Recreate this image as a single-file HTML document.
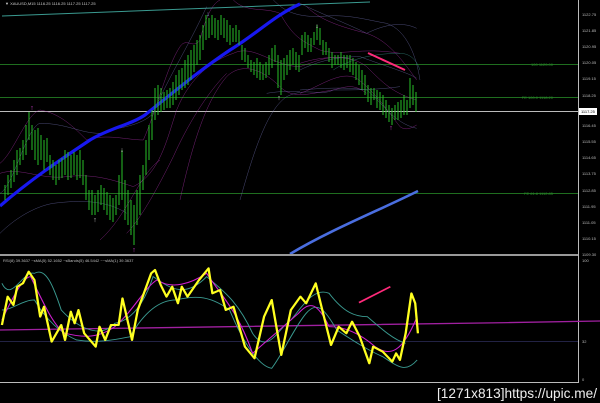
<!DOCTYPE html>
<html><head><meta charset="utf-8"><style>
html,body{margin:0;padding:0;background:#000;width:600px;height:403px;overflow:hidden}
svg{display:block}
text{font-family:"Liberation Sans",sans-serif}
</style></head><body>
<svg width="600" height="403" viewBox="0 0 600 403" xmlns="http://www.w3.org/2000/svg">
<rect width="600" height="403" fill="#000"/>
<line x1="0" y1="64.5" x2="578" y2="64.5" stroke="#1f6e1f" stroke-width="1"/>
<line x1="0" y1="97.5" x2="578" y2="97.5" stroke="#1f6e1f" stroke-width="1"/>
<line x1="0" y1="193.5" x2="578" y2="193.5" stroke="#1f6e1f" stroke-width="1"/>
<line x1="0" y1="111.5" x2="578" y2="111.5" stroke="#bbb" stroke-width="1"/>
<text x="553" y="66" font-size="4" fill="#2a8a2a" text-anchor="end">100 1120.00</text>
<text x="553" y="99" font-size="4" fill="#2a8a2a" text-anchor="end">FE 100.0 1118.20</text>
<text x="553" y="195" font-size="4" fill="#2a8a2a" text-anchor="end">FE 61.8 1112.85</text>
<line x1="2" y1="16" x2="370" y2="2" stroke="#3a9a90" stroke-width="1"/>
<g fill="none" stroke-width="1" transform="scale(0.3333)">
<path d="M0,490 C40,460 80,340 120,330 C180,340 220,380 260,420 C320,400 380,420 430,420 C470,330 500,200 540,140 C560,110 580,150 600,120 C620,40 640,10 660,0" stroke="#b030b0"/>
<path d="M0,580 C40,560 80,380 120,370 C200,370 240,400 300,400 C360,380 420,380 460,340 C500,240 560,150 620,20" stroke="#7070b0"/>
<path d="M0,520 C60,500 120,540 200,530 C280,520 340,540 400,560 C480,520 500,420 530,330 C570,230 640,180 700,160 C760,130 820,200 900,200 C960,180 1000,160 1060,180" stroke="#b030b0"/>
<path d="M540,600 C580,420 620,300 680,230 C720,190 780,200 840,260 C880,300 930,280 1000,270 C1040,260 1060,250 1100,280" stroke="#b030b0"/>
<path d="M720,600 C760,460 800,330 860,290 C920,260 960,290 1000,270 C1060,270 1130,270 1200,260" stroke="#7070b0"/>
<path d="M700,0 C740,40 790,20 840,40 C880,110 900,120 960,150 C1020,170 1080,140 1200,160" stroke="#b030b0"/>
<path d="M820,0 C850,30 880,50 960,50 C1040,40 1100,60 1160,70 C1220,90 1250,170 1260,240" stroke="#7070b0"/>
<path d="M1000,210 C1060,170 1140,160 1200,160 C1230,160 1250,180 1260,210" stroke="#3a9a90"/>
<path d="M300,720 C380,650 420,520 480,480" stroke="#b030b0"/>
<path d="M0,700 C40,660 100,620 160,610 C240,600 320,600 380,640" stroke="#7070b0"/>
<path d="M380,700 C420,660 470,570 520,470 C560,380 620,280 680,220" stroke="#b030b0"/>
</g>
<g fill="none" stroke-width="1" transform="translate(300,0) scale(0.3333)">
<path d="M0,210 C60,180 120,170 180,170 C260,200 330,220 350,235" stroke="#7070b0"/>
<path d="M0,190 C60,170 150,160 200,200 C250,250 280,280 350,300" stroke="#b030b0"/>
<path d="M20,20 C60,60 120,80 200,100 C260,120 300,170 350,240" stroke="#b030b0"/>
<path d="M0,10 C60,40 140,70 200,100 C240,80 300,60 350,85" stroke="#7070b0"/>
<path d="M0,280 C60,260 120,210 170,235 C230,280 260,330 300,380 C320,395 340,380 350,375" stroke="#b030b0"/>
<path d="M0,270 C60,265 140,260 200,270 C240,300 280,370 350,385" stroke="#7070b0"/>
<path d="M-100,280 C-40,270 0,275 0,275" stroke="#7070b0"/>
</g>
<path d="M0,206 C30,180 60,160 90,140 C110,128 130,125 145,115 C170,95 200,70 230,50 C255,35 275,15 300,4" fill="none" stroke="#1818f0" stroke-width="3.2"/>
<path d="M290,254 C330,230 380,210 418,191" fill="none" stroke="#4a6ee0" stroke-width="2.6"/>
<g stroke="#28c028" stroke-width="1">
<line x1="5" y1="185" x2="5" y2="200"/><line x1="8" y1="175" x2="8" y2="195"/><line x1="11" y1="170" x2="11" y2="188"/><line x1="14" y1="160" x2="14" y2="182"/><line x1="17" y1="150" x2="17" y2="175"/><line x1="20" y1="148" x2="20" y2="165"/><line x1="23" y1="140" x2="23" y2="160"/><line x1="26" y1="125" x2="26" y2="155"/><line x1="29" y1="112" x2="29" y2="140"/><line x1="32" y1="125" x2="32" y2="150"/><line x1="35" y1="130" x2="35" y2="160"/><line x1="38" y1="128" x2="38" y2="165"/><line x1="41" y1="135" x2="41" y2="160"/><line x1="44" y1="140" x2="44" y2="170"/><line x1="47" y1="138" x2="47" y2="162"/><line x1="50" y1="155" x2="50" y2="175"/><line x1="53" y1="160" x2="53" y2="180"/><line x1="56" y1="165" x2="56" y2="185"/><line x1="59" y1="160" x2="59" y2="180"/><line x1="62" y1="158" x2="62" y2="178"/><line x1="65" y1="150" x2="65" y2="175"/><line x1="68" y1="152" x2="68" y2="180"/><line x1="71" y1="155" x2="71" y2="178"/><line x1="74" y1="152" x2="74" y2="175"/><line x1="77" y1="155" x2="77" y2="180"/><line x1="80" y1="150" x2="80" y2="178"/><line x1="83" y1="160" x2="83" y2="185"/><line x1="86" y1="175" x2="86" y2="200"/><line x1="89" y1="190" x2="89" y2="210"/><line x1="92" y1="190" x2="92" y2="215"/><line x1="95" y1="195" x2="95" y2="215"/><line x1="98" y1="190" x2="98" y2="212"/><line x1="101" y1="185" x2="101" y2="205"/><line x1="104" y1="188" x2="104" y2="210"/><line x1="107" y1="192" x2="107" y2="215"/><line x1="110" y1="195" x2="110" y2="220"/><line x1="113" y1="198" x2="113" y2="222"/><line x1="116" y1="195" x2="116" y2="215"/><line x1="119" y1="175" x2="119" y2="205"/><line x1="122" y1="150" x2="122" y2="200"/><line x1="125" y1="180" x2="125" y2="220"/><line x1="128" y1="190" x2="128" y2="225"/><line x1="131" y1="200" x2="131" y2="235"/><line x1="134" y1="205" x2="134" y2="245"/><line x1="137" y1="190" x2="137" y2="225"/><line x1="140" y1="175" x2="140" y2="215"/><line x1="143" y1="165" x2="143" y2="190"/><line x1="146" y1="140" x2="146" y2="175"/><line x1="149" y1="125" x2="149" y2="160"/><line x1="152" y1="110" x2="152" y2="140"/><line x1="155" y1="88" x2="155" y2="120"/><line x1="158" y1="85" x2="158" y2="115"/><line x1="161" y1="88" x2="161" y2="112"/><line x1="164" y1="92" x2="164" y2="110"/><line x1="167" y1="90" x2="167" y2="108"/><line x1="170" y1="88" x2="170" y2="108"/><line x1="173" y1="82" x2="173" y2="105"/><line x1="176" y1="75" x2="176" y2="100"/><line x1="179" y1="70" x2="179" y2="95"/><line x1="182" y1="68" x2="182" y2="90"/><line x1="185" y1="60" x2="185" y2="88"/><line x1="188" y1="55" x2="188" y2="85"/><line x1="191" y1="50" x2="191" y2="80"/><line x1="194" y1="45" x2="194" y2="72"/><line x1="197" y1="40" x2="197" y2="65"/><line x1="200" y1="35" x2="200" y2="60"/><line x1="203" y1="25" x2="203" y2="50"/><line x1="206" y1="15" x2="206" y2="40"/><line x1="209" y1="18" x2="209" y2="38"/><line x1="212" y1="15" x2="212" y2="35"/><line x1="215" y1="18" x2="215" y2="38"/><line x1="218" y1="20" x2="218" y2="40"/><line x1="221" y1="15" x2="221" y2="35"/><line x1="224" y1="18" x2="224" y2="38"/><line x1="227" y1="20" x2="227" y2="42"/><line x1="230" y1="25" x2="230" y2="45"/><line x1="233" y1="28" x2="233" y2="42"/><line x1="236" y1="25" x2="236" y2="42"/><line x1="239" y1="30" x2="239" y2="45"/><line x1="242" y1="45" x2="242" y2="60"/><line x1="245" y1="48" x2="245" y2="62"/><line x1="248" y1="55" x2="248" y2="68"/><line x1="251" y1="60" x2="251" y2="72"/><line x1="254" y1="62" x2="254" y2="75"/><line x1="257" y1="58" x2="257" y2="78"/><line x1="260" y1="62" x2="260" y2="80"/><line x1="263" y1="65" x2="263" y2="80"/><line x1="266" y1="62" x2="266" y2="78"/><line x1="269" y1="55" x2="269" y2="75"/><line x1="272" y1="48" x2="272" y2="68"/><line x1="275" y1="45" x2="275" y2="62"/><line x1="278" y1="55" x2="278" y2="88"/><line x1="281" y1="60" x2="281" y2="95"/><line x1="284" y1="58" x2="284" y2="80"/><line x1="287" y1="55" x2="287" y2="75"/><line x1="290" y1="50" x2="290" y2="70"/><line x1="293" y1="48" x2="293" y2="65"/><line x1="296" y1="52" x2="296" y2="70"/><line x1="299" y1="55" x2="299" y2="72"/><line x1="302" y1="35" x2="302" y2="55"/><line x1="305" y1="32" x2="305" y2="48"/><line x1="308" y1="35" x2="308" y2="52"/><line x1="311" y1="38" x2="311" y2="52"/><line x1="314" y1="32" x2="314" y2="45"/><line x1="317" y1="25" x2="317" y2="40"/><line x1="320" y1="28" x2="320" y2="45"/><line x1="323" y1="40" x2="323" y2="55"/><line x1="326" y1="42" x2="326" y2="55"/><line x1="329" y1="48" x2="329" y2="62"/><line x1="332" y1="52" x2="332" y2="68"/><line x1="335" y1="55" x2="335" y2="65"/><line x1="338" y1="55" x2="338" y2="65"/><line x1="341" y1="52" x2="341" y2="68"/><line x1="344" y1="55" x2="344" y2="70"/><line x1="347" y1="55" x2="347" y2="68"/><line x1="350" y1="55" x2="350" y2="72"/><line x1="353" y1="58" x2="353" y2="75"/><line x1="356" y1="62" x2="356" y2="80"/><line x1="359" y1="65" x2="359" y2="85"/><line x1="362" y1="70" x2="362" y2="90"/><line x1="365" y1="75" x2="365" y2="95"/><line x1="368" y1="85" x2="368" y2="102"/><line x1="371" y1="88" x2="371" y2="105"/><line x1="374" y1="88" x2="374" y2="100"/><line x1="377" y1="90" x2="377" y2="108"/><line x1="380" y1="92" x2="380" y2="110"/><line x1="383" y1="95" x2="383" y2="115"/><line x1="386" y1="100" x2="386" y2="118"/><line x1="389" y1="105" x2="389" y2="122"/><line x1="392" y1="108" x2="392" y2="125"/><line x1="395" y1="105" x2="395" y2="120"/><line x1="398" y1="102" x2="398" y2="120"/><line x1="401" y1="100" x2="401" y2="118"/><line x1="404" y1="95" x2="404" y2="115"/><line x1="407" y1="100" x2="407" y2="115"/><line x1="410" y1="78" x2="410" y2="108"/><line x1="413" y1="85" x2="413" y2="105"/><line x1="416" y1="92" x2="416" y2="112"/>
</g>
<g font-size="7" text-anchor="middle">
<text x="32" y="110" fill="#d040d0">↑</text>
<text x="122" y="152" fill="#ccc">↓</text>
<text x="95" y="222" fill="#ccc">↑</text>
<text x="134" y="252" fill="#d040d0">↑</text>
<text x="208" y="16" fill="#8ad">↓</text>
<text x="317" y="28" fill="#ccc">↓</text>
<text x="279" y="100" fill="#ccc">↑</text>
<text x="391" y="130" fill="#d040d0">↑</text>
</g>
<line x1="368" y1="53" x2="405" y2="70" stroke="#ff2a7a" stroke-width="2"/>
<text x="5" y="5" font-size="4" fill="#ccc">▼ XAUUSD,M15  1116.25 1116.25 1117.25 1117.25</text>
<line x1="578.5" y1="0" x2="578.5" y2="383" stroke="#bbb" stroke-width="1"/>
<g font-size="4" fill="#bbb">
<text x="582" y="16">1122.75</text><text x="582" y="32">1121.85</text><text x="582" y="48">1120.95</text><text x="582" y="64">1120.05</text><text x="582" y="80">1119.15</text><text x="582" y="97">1118.25</text><text x="582" y="127">1116.45</text><text x="582" y="143">1115.55</text><text x="582" y="159">1114.65</text><text x="582" y="175">1113.75</text><text x="582" y="192">1112.85</text><text x="582" y="208">1111.95</text><text x="582" y="224">1111.05</text><text x="582" y="240">1110.15</text><text x="582" y="256">1109.30</text><text x="582" y="262">100</text><text x="582" y="343">32</text><text x="582" y="381">0</text>
</g>
<rect x="579" y="108" width="18" height="7" fill="#fff"/>
<text x="581" y="113" font-size="4" fill="#000">1117.25</text>
<rect x="0" y="254" width="578" height="2" fill="#999"/>
<text x="3" y="262" font-size="4" fill="#bbb">RSI(8) 39.3637  ~sMA(5) 52.1652  ~sBands(5) 46.5442  ~~sMA(1) 39.3637</text>
<line x1="0" y1="382.5" x2="578" y2="382.5" stroke="#bbb"/>
<line x1="0" y1="341.5" x2="578" y2="341.5" stroke="#222244"/>
<g fill="none" transform="translate(0,200) scale(0.3827,0.3333)">
<path d="M0,390 C400,385 1000,375 1568,363" stroke="#a020a0" stroke-width="4"/>
<path d="M5,250 C30,310 60,210 90,220 C120,200 140,260 160,330 C200,380 260,420 300,370 C350,360 380,300 400,230 C440,260 480,300 540,230 C580,270 620,300 660,400 C700,470 730,380 760,360 C790,320 820,260 860,280 C900,340 930,350 960,350 C1000,390 1030,420 1060,430" stroke="#3a9a90" stroke-width="2.6"/>
<path d="M5,330 C30,330 60,300 90,300 C120,360 160,400 200,420 C250,430 300,420 340,410 C380,330 420,300 460,300 C500,290 540,280 600,330 C640,440 680,500 710,505 C740,460 770,380 800,340 C830,300 850,330 880,390 C920,420 960,450 1000,470 C1040,500 1060,520 1090,480" stroke="#3a9a90" stroke-width="2.6"/>
<path d="M5,360 C30,300 60,230 80,230 C110,300 140,380 170,400 C210,410 250,420 300,380 C350,330 380,260 410,240 C450,270 500,250 540,220 C580,290 620,330 660,460 C700,420 740,380 780,340 C810,300 830,310 860,380 C900,380 940,400 980,440 C1020,470 1050,460 1090,350" stroke="#d020d0" stroke-width="3"/>
<path d="M5,375 L20,290 L35,315 L45,260 L60,250 L75,215 L90,240 L105,350 L115,320 L135,425 L160,375 L170,420 L185,335 L195,370 L205,330 L220,400 L250,440 L260,380 L275,420 L290,375 L310,375 L320,295 L345,420 L360,330 L395,220 L405,210 L420,255 L435,290 L450,260 L465,310 L475,260 L490,290 L520,240 L545,205 L555,280 L575,270 L590,330 L610,320 L640,440 L665,475 L690,350 L710,300 L735,465 L760,330 L785,290 L800,310 L825,250 L840,320 L865,435 L885,380 L905,400 L920,365 L940,410 L965,490 L975,440 L1000,455 L1025,485 L1035,460 L1045,480 L1060,400 L1075,280 L1085,310 L1092,400" stroke="#ffff20" stroke-width="6" stroke-linejoin="round"/>
<line x1="938" y1="308" x2="1020" y2="260" stroke="#ff2a7a" stroke-width="5"/>
</g>
<text x="437" y="398" font-size="14" fill="#eee" textLength="160" lengthAdjust="spacingAndGlyphs">[1271x813]https://upic.me/</text>
</svg>
</body></html>
